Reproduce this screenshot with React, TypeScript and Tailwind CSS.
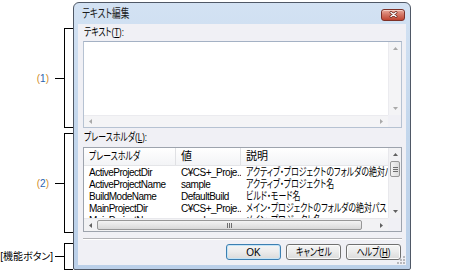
import React from 'react'

const font = "font-['Liberation_Sans','Noto_Sans_CJK_JP',sans-serif] [font-feature-settings:'palt']"

const rows = [
  ['ActiveProjectDir', 'C¥CS+_Proje..', 'アクティブ・プロジェクトのフォルダの絶対パス'],
  ['ActiveProjectName', 'sample', 'アクティブ・プロジェクト名'],
  ['BuildModeName', 'DefaultBuild', 'ビルド・モード名'],
  ['MainProjectDir', 'C¥CS+_Proje..', 'メイン・プロジェクトのフォルダの絶対パス'],
  ['MainProjectName', 'sample', 'メイン・プロジェクト名'],
]

// narrow japanese text, the dialog font is condensed
const J = ({ children, center }: { children: React.ReactNode; center?: boolean }) => (
  <span className={`inline-block whitespace-nowrap text-[11px] scale-x-[0.72] ${center ? 'origin-center' : 'origin-left'}`}>
    {children}
  </span>
)

// tiny scroll arrow
const Tri = ({ d, c }: { d: 'u' | 'd' | 'l' | 'r'; c: string }) => {
  const v = d === 'u' || d === 'd'
  const pts = { u: '0,3 2.5,0 5,3', d: '0,0 2.5,3 5,0', l: '3,0 0,2.5 3,5', r: '0,0 3,2.5 0,5' }[d]
  return (
    <svg width={v ? 5 : 3} height={v ? 3 : 5} viewBox={v ? '0 0 5 3' : '0 0 3 5'}>
      <polygon points={pts} fill={c} />
    </svg>
  )
}

const Num = ({ n }: { n: string }) => (
  <span className="text-[10px]">
    <span className="text-[#d08a1e]">(</span>
    <span className="text-[#2a63b0]">{n}</span>
    <span className="text-[#d08a1e]">)</span>
  </span>
)

const Bracket = ({ cls, pr, label }: { cls: string; pr: string; label: React.ReactNode }) => (
  <div className={`flex items-center justify-end ${cls}`}>
    <div className={pr}>{label}</div>
    <div className="w-[9px] h-px bg-black" />
    <div className="w-[9px] h-full border-y border-l border-black" />
  </div>
)

const CloseBtn = () => (
  <div className="mt-[2px] w-[24px] h-[12px] rounded-[3px] border border-[#7d3128] bg-gradient-to-b from-[#eaa899] via-[#d27362] to-[#c0432f] shadow-[inset_0_1px_0_#f5cfc5] flex items-center justify-center">
    <svg width="9" height="7" viewBox="0 0 9 7">
      <path d="M2 1.5 L7 5.5 M7 1.5 L2 5.5" stroke="#5a1c14" strokeWidth="2.8" strokeLinecap="round" />
      <path d="M2 1.5 L7 5.5 M7 1.5 L2 5.5" stroke="#ffffff" strokeWidth="1.5" strokeLinecap="round" />
    </svg>
  </div>
)

const Btn = ({ children, def }: { children: React.ReactNode; def?: boolean }) => (
  <div
    className={`w-[55px] h-[16px] rounded-[3px] border flex items-center justify-center bg-gradient-to-b from-[#f5f5f5] via-[#ebebeb] to-[#dadada] ${
      def ? 'border-[#3c7fb1] shadow-[inset_0_0_0_1px_#c3e4f7]' : 'border-[#707070] shadow-[inset_0_0_0_1px_#fbfbfb]'
    }`}
  >
    {children}
  </div>
)

const ArrowBox = ({ children, w, h }: { children: React.ReactNode; w: string; h: string }) => (
  <div className={`${w} ${h} shrink-0 flex items-center justify-center`}>{children}</div>
)

export default function App() {
  return (
    <div className={`w-[474px] h-[276px] bg-white flex items-start text-[10px] text-black ${font}`}>
      {/* callouts */}
      <div className="w-[73px] shrink-0 flex flex-col pt-[28px]">
        <Bracket cls="h-[100px]" pr="pr-[6px]" label={<Num n="1" />} />
        <Bracket cls="mt-[5px] h-[100px]" pr="pr-[6px]" label={<Num n="2" />} />
        <Bracket cls="mt-[10px] h-[27px]" pr="pr-[2px]" label={<span>[機能ボタン]</span>} />
      </div>

      {/* dialog */}
      <div className="mt-[2px] w-[338px] h-[268px] shrink-0 rounded-t-[6px] rounded-b-[2px] border border-[#4f5866] bg-gradient-to-b from-[#d3e2f3] via-[#c2d6ec] to-[#bbd0e9] flex flex-col px-[4px] pb-[4px]">
        <div className="h-[21px] shrink-0 flex items-center justify-between pl-[4px] pr-[1px]">
          <span className="inline-block whitespace-nowrap text-[12px] text-[#1b1b1b] scale-x-[0.72] origin-left">テキスト編集</span>
          <CloseBtn />
        </div>

        <div className="relative flex-1 bg-[#f0f0f5] flex flex-col pl-[5px] pr-[4px]">
          <div className="mt-[2px] h-[13px] leading-[13px] pl-[1px] flex items-center">
            <J>
              テキスト(<span className="underline">T</span>):
            </J>
          </div>

          {/* text box */}
          <div className="mt-[2px] h-[87px] border border-[#b6c2d2] border-t-[#a4b1c4] bg-white flex flex-col">
            <div className="flex-1 flex">
              <div className="flex-1" />
              <div className="w-[13px] bg-[#f4f4f6] border-l border-[#ebebef] flex flex-col justify-between">
                <ArrowBox w="w-full" h="h-[13px]"><Tri d="u" c="#a9a9a9" /></ArrowBox>
                <ArrowBox w="w-full" h="h-[13px]"><Tri d="d" c="#a9a9a9" /></ArrowBox>
              </div>
            </div>
            <div className="h-[12px] flex">
              <div className="flex-1 bg-[#f4f4f6] border-t border-[#ebebef] flex justify-between">
                <ArrowBox w="w-[13px]" h="h-full"><Tri d="l" c="#a9a9a9" /></ArrowBox>
                <ArrowBox w="w-[13px]" h="h-full"><Tri d="r" c="#a9a9a9" /></ArrowBox>
              </div>
              <div className="w-[13px] bg-[#f0f0f5]" />
            </div>
          </div>

          <div className="mt-[3px] h-[13px] leading-[13px] pl-[1px] flex items-center">
            <J>
              プレースホルダ(<span className="underline">L</span>):
            </J>
          </div>

          {/* list view */}
          <div className="mt-[3px] h-[85px] border border-[#9da3ad] bg-white flex flex-col">
            <div className="flex-1 min-h-0 flex">
              <div className="flex-1 min-w-0 overflow-hidden">
                <div className="h-[18px] flex bg-gradient-to-b from-white to-[#f3f4f6] border-b border-[#e4e5e8]">
                  <div className="w-[92px] pl-[5px] flex items-center border-r border-[#e0e1e4] overflow-hidden">
                    <J>プレースホルダ</J>
                  </div>
                  <div className="w-[65px] pl-[5px] flex items-center border-r border-[#e0e1e4] text-[11px]">値</div>
                  <div className="flex-1 pl-[5px] flex items-center text-[11px]">説明</div>
                </div>
                {rows.map(r => (
                  <div key={r[0]} className="h-[12px] flex items-center whitespace-nowrap">
                    <div className="w-[92px] pl-[5px] overflow-hidden tracking-[-0.5px]">{r[0]}</div>
                    <div className="w-[65px] pl-[5px] overflow-hidden tracking-[-0.5px]">{r[1]}</div>
                    <div className="flex-1 min-w-0 pl-[5px] overflow-hidden h-[12px] flex items-center">
                      <J>{r[2]}</J>
                    </div>
                  </div>
                ))}
              </div>
              <div className="w-[13px] shrink-0 bg-[#f2f2f4] border-l border-[#e8e8ec] flex flex-col">
                <ArrowBox w="w-full" h="h-[13px]"><Tri d="u" c="#606060" /></ArrowBox>
                <div className="h-[16px] mx-[1px] rounded-[2px] border border-[#979797] bg-gradient-to-r from-[#f3f3f3] to-[#dcdcdc] flex flex-col items-center justify-center gap-[1px]">
                  <div className="w-[5px] h-px bg-[#6e6e6e]" />
                  <div className="w-[5px] h-px bg-[#6e6e6e]" />
                  <div className="w-[5px] h-px bg-[#6e6e6e]" />
                </div>
                <div className="flex-1" />
                <ArrowBox w="w-full" h="h-[13px]"><Tri d="d" c="#606060" /></ArrowBox>
              </div>
            </div>
            <div className="h-[13px] flex">
              <div className="flex-1 bg-[#f2f2f4] border-t border-[#e8e8ec] flex">
                <ArrowBox w="w-[13px]" h="h-full"><Tri d="l" c="#606060" /></ArrowBox>
                <div className="w-[265px] my-[1px] rounded-[2px] border border-[#979797] bg-gradient-to-b from-[#f3f3f3] to-[#d8d8d8] flex items-center justify-center gap-[1px]">
                  <div className="w-px h-[5px] bg-[#6e6e6e]" />
                  <div className="w-px h-[5px] bg-[#6e6e6e]" />
                  <div className="w-px h-[5px] bg-[#6e6e6e]" />
                </div>
                <div className="flex-1" />
                <ArrowBox w="w-[13px]" h="h-full"><Tri d="r" c="#606060" /></ArrowBox>
              </div>
              <div className="w-[13px] bg-[#f0f0f5]" />
            </div>
          </div>

          <div className="mt-[6px] h-[2px] border-t border-[#b2b2b6] border-b border-b-white" />

          <div className="mt-[4px] flex justify-end gap-[5px] pr-[1px]">
            <Btn def>OK</Btn>
            <Btn>
              <J center>キャンセル</J>
            </Btn>
            <Btn>
              <J center>
                ヘルプ(<span className="underline">H</span>)
              </J>
            </Btn>
          </div>

          {/* size grip */}
          <svg className="absolute right-[1px] bottom-[1px]" width="8" height="8" viewBox="0 0 8 8">
            {[[6, 0], [6, 3], [3, 3], [6, 6], [3, 6], [0, 6]].map(([x, y]) => (
              <rect key={`${x}-${y}`} x={x} y={y} width="2" height="2" fill="#b8b8bc" />
            ))}
          </svg>
        </div>
      </div>
    </div>
  )
}
